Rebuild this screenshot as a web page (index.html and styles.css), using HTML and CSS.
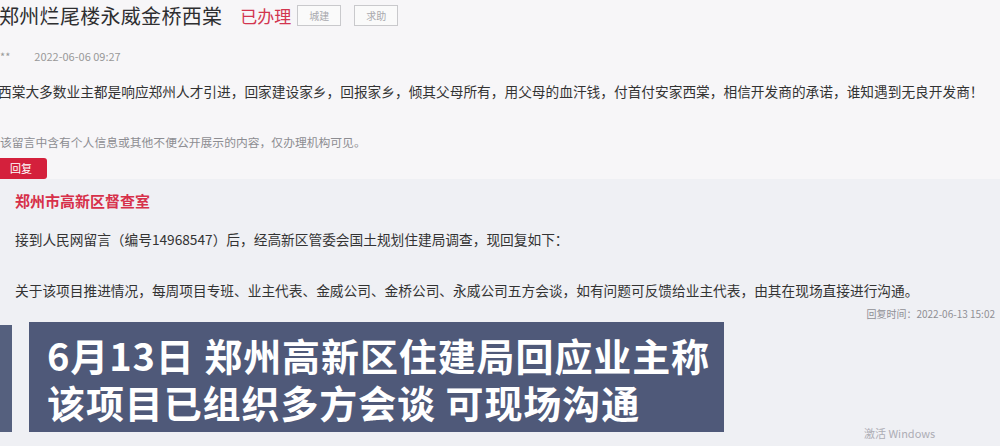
FILE: index.html
```html
<!DOCTYPE html>
<html lang="zh-CN">
<head>
  <meta charset="UTF-8" />
  <title>郑州烂尾楼永威金桥西棠</title>
  <link rel="stylesheet" href="styles.css">
</head>
<body>
  <div class="post">
    <div class="titleRow">
      <h1 class="title">郑州烂尾楼永威金桥西棠</h1>
      <span class="state">已办理</span>
      <span class="tag">城建</span>
      <span class="tag">求助</span>
    </div>
    <div class="meta">
      <span class="user">**</span>
      <span class="date">2022-06-06 09:27</span>
    </div>
    <p class="content">西棠大多数业主都是响应郑州人才引进，回家建设家乡，回报家乡，倾其父母所有，用父母的血汗钱，付首付安家西棠，相信开发商的承诺，谁知遇到无良开发商！</p>
    <p class="notice">该留言中含有个人信息或其他不便公开展示的内容，仅办理机构可见。</p>
    <span class="replyBtn">回复</span>
  </div>

  <div class="reply">
    <div class="dept">郑州市高新区督查室</div>
    <p class="replyText first">接到人民网留言（编号14968547）后，经高新区管委会国土规划住建局调查，现回复如下：</p>
    <p class="replyText">关于该项目推进情况，每周项目专班、业主代表、金威公司、金桥公司、永威公司五方会谈，如有问题可反馈给业主代表，由其在现场直接进行沟通。</p>
    <div class="replyTime">回复时间：2022-06-13 15:02</div>
  </div>

  <div class="captionEdge"></div>
  <div class="caption">
    <div class="capLine">6月13日 郑州高新区住建局回应业主称</div>
    <div class="capLine">该项目已组织多方会谈 可现场沟通</div>
  </div>

  <div class="watermark">激活 Windows</div>
</body>
</html>
```

FILE: styles.css
```css
html, body {
  margin: 0;
  padding: 0;
  height: 446px;
  overflow: hidden;
  background: #f7f6f8;
  font-family: "Noto Sans CJK SC", "Noto Sans", sans-serif;
  color: #333;
}

p {
  margin: 0;
}

.titleRow {
  display: flex;
  align-items: center;
  height: 30px;
  margin-left: -1px;
}

.title {
  margin: 0;
  font-size: 20px;
  font-weight: normal;
  color: #2e2e30;
  letter-spacing: 0.3px;
}

.state {
  margin-left: 18px;
  font-size: 17px;
  color: #d2354f;
}

.tag {
  margin-left: 6px;
  padding: 0 11px;
  height: 19px;
  line-height: 19px;
  border: 1px solid #c9c9cc;
  font-size: 10px;
  color: #a9a9ad;
  background: #fafafa;
}

.tag + .tag {
  margin-left: 13px;
}

.meta {
  display: flex;
  gap: 24px;
  margin-top: 18px;
  font-size: 11px;
  line-height: 16px;
  color: #999;
}

.content {
  margin-top: 17px;
  font-size: 13.7px;
  line-height: 20px;
  color: #333;
  white-space: nowrap;
  margin-left: -2px;
}

.notice {
  margin-top: 33px;
  font-size: 11.8px;
  line-height: 16px;
  color: #8d8d92;
}

.replyBtn {
  display: inline-block;
  margin-top: 8px;
  width: 47px;
  height: 21px;
  line-height: 21px;
  padding-left: 10px;
  box-sizing: border-box;
  background: #d4203c;
  color: #fff;
  font-size: 11px;
  border-radius: 0 3px 3px 0;
}

.reply {
  padding: 11px 5px 0 15px;
  height: 270px;
  background: #eff0f4;
}

.dept {
  font-size: 15px;
  line-height: 22px;
  font-weight: bold;
  color: #d7304a;
}

.replyText {
  font-size: 13.7px;
  line-height: 20px;
  color: #333;
  white-space: nowrap;
}

.replyText.first {
  margin-top: 17px;
  margin-bottom: 31px;
}

.replyTime {
  margin-top: 6px;
  text-align: right;
  font-size: 10px;
  line-height: 16px;
  color: #8f8f95;
}

.caption {
  position: absolute;
  left: 29px;
  top: 322px;
  width: 695px;
  height: 110px;
  box-sizing: border-box;
  padding: 9px 0 0 18px;
  background: #4f5979;
  color: #fff;
  font-size: 38px;
  font-weight: bold;
  letter-spacing: 0.9px;
}

.capLine {
  height: 47px;
  line-height: 47px;
}

.captionEdge {
  position: absolute;
  left: 0;
  top: 325px;
  width: 12px;
  height: 107px;
  background: #55607e;
}

.watermark {
  position: absolute;
  left: 864px;
  top: 425px;
  font-size: 11px;
  color: #adadb4;
}
```
